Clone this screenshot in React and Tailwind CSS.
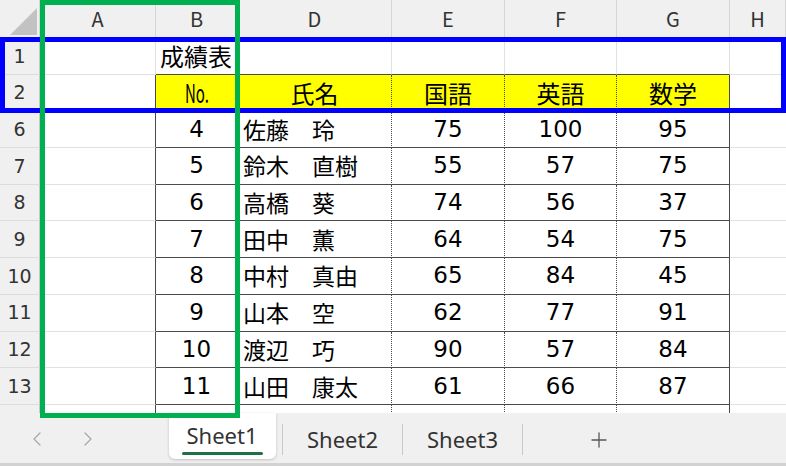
import React from 'react';
import { ChevronLeft, ChevronRight, Plus } from 'lucide-react';

const rows = [
  [6, 4, '佐藤　玲', 75, 100, 95],
  [7, 5, '鈴木　直樹', 55, 57, 75],
  [8, 6, '高橋　葵', 74, 56, 37],
  [9, 7, '田中　薫', 64, 54, 75],
  [10, 8, '中村　真由', 65, 84, 45],
  [11, 9, '山本　空', 62, 77, 91],
  [12, 10, '渡辺　巧', 90, 57, 84],
  [13, 11, '山田　康太', 61, 66, 87],
];

const rowHead = "flex items-center justify-center bg-[#f0f0f0] border-r border-b border-r-[#c8c8c8] border-b-[#dcdcdc] text-[19px] text-[#333] font-['DejaVu_Sans',sans-serif]";
const colHead = 'flex items-center justify-center bg-[#f0f0f0] border-r border-b border-r-[#d6d6d6] border-b-[#c8c8c8] text-[20px] text-[#333]';
const plain = 'border-r border-b border-[#e1e1e1]';
const cjk = 'flex items-center justify-center text-[24px] leading-none text-black overflow-hidden';
const num = "flex items-center justify-center text-[23px] leading-none text-black overflow-hidden font-['DejaVu_Sans',sans-serif]";
const name = 'flex items-center pl-[5px] text-[23px] leading-none overflow-hidden whitespace-nowrap border-r border-b border-[#4a4a4a] [border-right-style:dotted]';

export default function App() {
  return (
    <div className="relative w-[786px] h-[466px] overflow-hidden bg-white font-['Noto_Sans_CJK_JP',sans-serif]">
      <div className="h-[413px] overflow-hidden">
        <div className="grid grid-cols-[40px_116px_82px_154px_113px_112px_113px_56px] grid-rows-[38px_repeat(10,36.7px)_36.7px]">
          {/* column headers */}
          <div className={colHead + ' relative'}>
            <svg className="absolute inset-0" width="40" height="38" viewBox="0 0 40 38">
              <polygon points="10,35 37,8 37,35" fill="#c2c2c2" />
            </svg>
          </div>
          {['A', 'B', 'D', 'E', 'F', 'G', 'H'].map((c) => (
            <div key={c} className={colHead}>{c}</div>
          ))}

          {/* row 1 */}
          <div className={rowHead}>1</div>
          <div className={plain}></div>
          <div className="flex items-center pl-[4px] text-[24px] leading-none border-r border-r-[#e1e1e1] border-b border-b-[#4a4a4a]">成績表</div>
          <div className="border-r border-r-[#e1e1e1] border-b border-b-[#4a4a4a]"></div>
          <div className="border-r border-r-[#e1e1e1] border-b border-b-[#4a4a4a]"></div>
          <div className="border-r border-r-[#e1e1e1] border-b border-b-[#4a4a4a]"></div>
          <div className="border-r border-r-[#e1e1e1] border-b border-b-[#4a4a4a]"></div>
          <div className="border-b border-b-[#e1e1e1]"></div>

          {/* row 2 */}
          <div className={rowHead}>2</div>
          <div className="border-r border-r-[#4a4a4a] border-b border-b-[#e1e1e1]"></div>
          <div className={cjk + ' bg-[#ffff00] border-r border-b border-[#4a4a4a]'}>
            <span className="inline-block scale-x-[0.6] text-[25px]">No.</span>
          </div>
          <div className={cjk + ' bg-[#ffff00] border-r border-b border-[#4a4a4a] [border-right-style:dotted]'}>氏名</div>
          <div className={cjk + ' bg-[#ffff00] border-r border-b border-[#4a4a4a] [border-right-style:dotted]'}>国語</div>
          <div className={cjk + ' bg-[#ffff00] border-r border-b border-[#4a4a4a] [border-right-style:dotted]'}>英語</div>
          <div className={cjk + ' bg-[#ffff00] border-r border-b border-[#4a4a4a]'}>数学</div>
          <div className="border-b border-b-[#e1e1e1]"></div>

          {rows.map((r) => (
            <React.Fragment key={r[0]}>
              <div className={rowHead}>{r[0]}</div>
              <div className="border-r border-r-[#4a4a4a] border-b border-b-[#e1e1e1]"></div>
              <div className={num + ' border-r border-b border-[#4a4a4a]'}>{r[1]}</div>
              <div className={name}>{r[2]}</div>
              <div className={num + ' border-r border-b border-[#4a4a4a] [border-right-style:dotted]'}>{r[3]}</div>
              <div className={num + ' border-r border-b border-[#4a4a4a] [border-right-style:dotted]'}>{r[4]}</div>
              <div className={num + ' border-r border-b border-[#4a4a4a]'}>{r[5]}</div>
              <div className="border-b border-b-[#e1e1e1]"></div>
            </React.Fragment>
          ))}

          {/* row 14, mostly hidden below the tab bar */}
          <div className={rowHead}></div>
          <div className="border-r border-r-[#4a4a4a]"></div>
          <div className="border-r border-[#4a4a4a]"></div>
          <div className="border-r border-[#4a4a4a] [border-right-style:dotted]"></div>
          <div className="border-r border-[#4a4a4a] [border-right-style:dotted]"></div>
          <div className="border-r border-[#4a4a4a] [border-right-style:dotted]"></div>
          <div className="border-r border-[#4a4a4a]"></div>
          <div></div>
        </div>
      </div>

      {/* sheet tabs */}
      <div className="flex h-[53px] bg-[#f0f0f0] border-b-[3px] border-b-[#d2d2d2] font-['Noto_Sans',sans-serif] text-[22px] text-[#333]">
        <div className="w-[162px] flex items-start pt-[14px]">
          <ChevronLeft className="ml-[25px]" size={24} strokeWidth={1.2} color="#a6a6a6" />
          <ChevronRight className="ml-[27px]" size={24} strokeWidth={1.2} color="#a6a6a6" />
        </div>
        <div className="w-[120px] flex justify-center">
          <div className="w-[107px] h-[46px] bg-white rounded-b-md shadow-[0_1px_3px_rgba(0,0,0,0.2)] flex flex-col items-center pt-[8px]">
            <span className="leading-[28px]">Sheet1</span>
            <div className="w-[81px] h-[3px] bg-[#1e7145] mt-[3px] rounded-full"></div>
          </div>
        </div>
        <div className="w-[120px] flex justify-center border-l border-l-[#c8c8c8] mt-[11px] mb-[8px] items-center">Sheet2</div>
        <div className="w-[120px] flex justify-center border-l border-l-[#c8c8c8] mt-[11px] mb-[8px] items-center">Sheet3</div>
        <div className="w-[152px] flex justify-center border-l border-l-[#c8c8c8] mt-[11px] mb-[8px] items-center">
          <Plus size={24} strokeWidth={1.3} color="#555" />
        </div>
      </div>

      {/* highlight frames */}
      <div className="absolute left-0 top-[37px] w-[786px] h-[76px] border-[5px] border-[#0000ff]"></div>
      <div className="absolute left-[40px] top-0 w-[200px] h-[418px] border-[5px] border-[#00b050]"></div>
    </div>
  );
}
